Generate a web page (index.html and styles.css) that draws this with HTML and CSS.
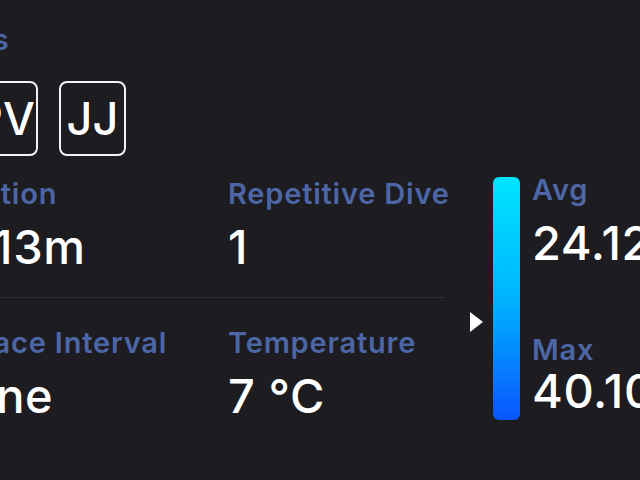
FILE: index.html
```html
<!DOCTYPE html>
<html>
<head>
<meta charset="utf-8">
<link rel="stylesheet" href="styles.css">
</head>
<body>
<div class="page">
  <div class="left">
    <div class="section-label">Divers</div>
    <div class="badges">
      <div class="badge">PV</div>
      <div class="badge">JJ</div>
    </div>
    <div class="stats">
      <div class="row row-top">
        <div class="cell">
          <div class="label">Duration</div>
          <div class="value">1h 13m</div>
        </div>
        <div class="cell">
          <div class="label">Repetitive Dive</div>
          <div class="value">1</div>
        </div>
      </div>
      <div class="row row-bottom">
        <div class="cell">
          <div class="label">Surface Interval</div>
          <div class="value">None</div>
        </div>
        <div class="cell">
          <div class="label">Temperature</div>
          <div class="value">7 °C</div>
        </div>
      </div>
    </div>
  </div>
  <div class="gauge">
    <div class="pointer"></div>
    <div class="bar"></div>
    <div class="gauge-stats">
      <div class="label">Avg</div>
      <div class="value">24.12</div>
      <div class="label max-label">Max</div>
      <div class="value max-value">40.10</div>
    </div>
  </div>
</div>
</body>
</html>
```
FILE: styles.css
```css
html, body {
  margin: 0;
  padding: 0;
  background: #1c1c21;
  width: 640px;
  height: 480px;
  overflow: hidden;
  font-family: Inter, "Noto Sans", sans-serif;
}
.page {
  display: flex;
  align-items: flex-start;
  padding-top: 23px;
  white-space: nowrap;
}
.left {
  margin-left: -69px;
  width: 514px;
  flex: none;
}
.label,
.section-label {
  font-size: 29px;
  line-height: 34px;
  font-weight: 600;
  letter-spacing: 0.8px;
  color: #4d66a6;
}
.section-label {
  margin-left: -16px;
}
.value {
  font-size: 47px;
  line-height: 52px;
  font-weight: 500;
  letter-spacing: 0.6px;
  color: #ffffff;
  margin-top: 10px;
}
.badges {
  display: flex;
  gap: 21px;
  margin-top: 24px;
  margin-left: 40px;
}
.badge {
  box-sizing: border-box;
  width: 67px;
  height: 75px;
  border: 2px solid #f2f2f2;
  border-radius: 8px;
  display: flex;
  align-items: center;
  justify-content: center;
  color: #fff;
  font-size: 45px;
  font-weight: 500;
}
.stats {
  margin-top: 21px;
}
.row {
  display: grid;
  grid-template-columns: 297px 1fr;
}
.row-top {
  padding-bottom: 24px;
  border-bottom: 1px solid #2e2e35;
}
.row-bottom {
  padding-top: 28px;
}
.gauge {
  display: flex;
  align-items: flex-start;
  margin-top: 154px;
  margin-left: 25px;
}
.pointer {
  width: 0;
  height: 0;
  border-top: 10px solid transparent;
  border-bottom: 10px solid transparent;
  border-left: 13px solid #ffffff;
  margin-top: 135px;
}
.bar {
  width: 27px;
  height: 243px;
  margin-left: 10px;
  border-radius: 6px;
  background: linear-gradient(to bottom, #00e4ff 0%, #00b4ff 50%, #0a55ff 100%);
}
.gauge-stats {
  margin-left: 12px;
  margin-top: -4px;
}
.gauge-stats .max-label {
  line-height: 30px;
  margin-top: 66px;
}
.gauge-stats .max-value {
  margin-top: 0;
}
```
